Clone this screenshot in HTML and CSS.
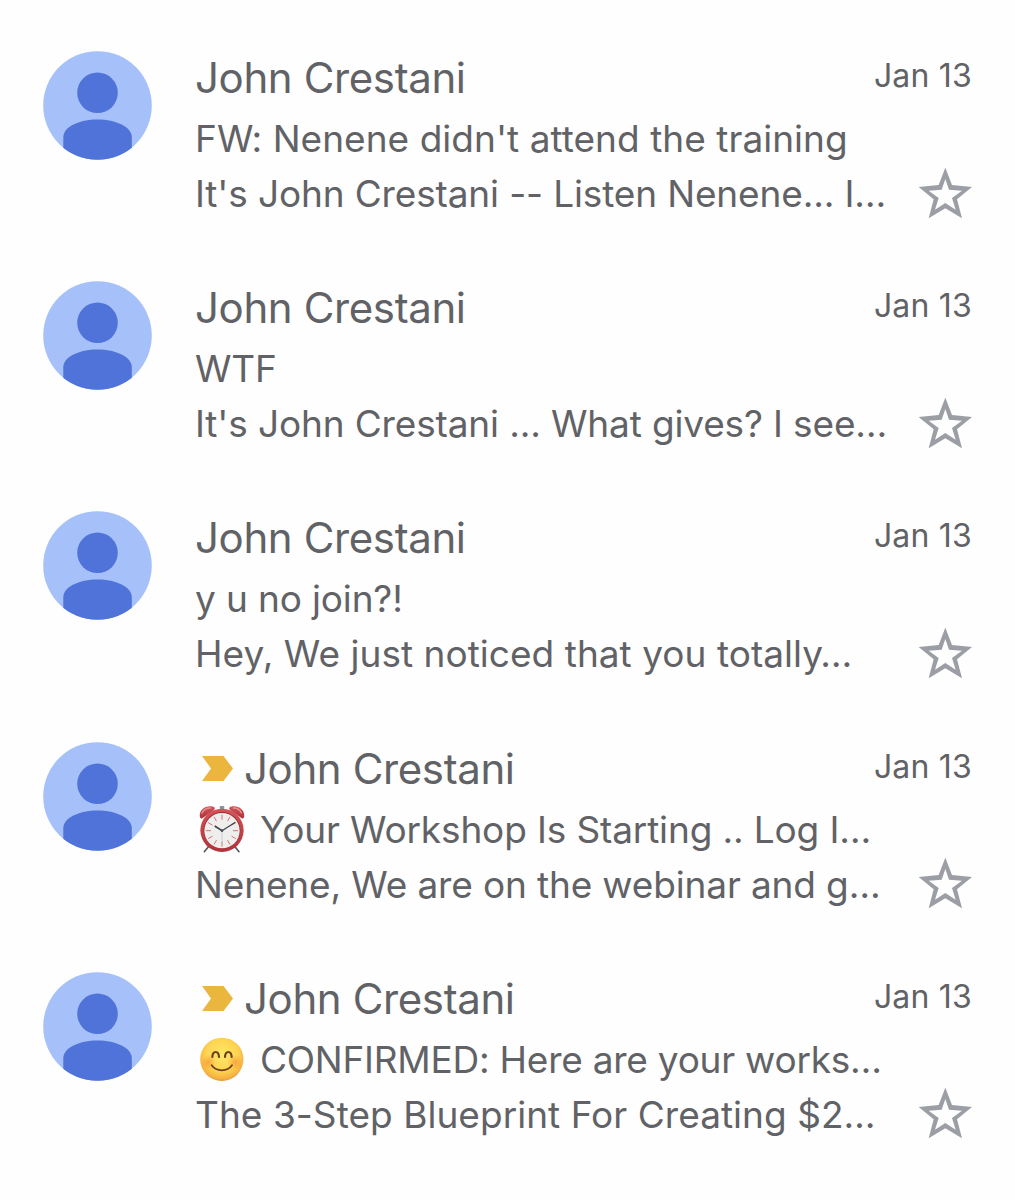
FILE: index.html
```html
<!DOCTYPE html>
<html lang="en">
<head>
<meta charset="UTF-8">
<meta name="viewport" content="width=device-width, initial-scale=1.0">
<title>Inbox</title>
<link rel="stylesheet" href="styles.css">
</head>
<body>

<!-- shared icons -->
<svg class="sprite" aria-hidden="true">
    <symbol id="avatar" viewBox="0 0 109 109">
        <clipPath id="avatarClip"><circle cx="54.5" cy="54.5" r="54.3" /></clipPath>
        <circle cx="54.5" cy="54.5" r="54.3" fill="#a6c1fa" />
        <g clip-path="url(#avatarClip)" fill="#4f73d8">
            <circle cx="54.5" cy="41.8" r="20.3" />
            <path d="M20.3 109V86C20.3 76 36 68.5 54.5 68.5S88.8 76 88.8 86v23z" />
        </g>
    </symbol>
    <symbol id="star" viewBox="9 13 162 156">
        <path d="M91 12L111 64 171 70 126 107 141 164 91 134 41 164 56 107 11 70 71 64zM91 46L80 78 41 81 71 103 60 138 91 118 122 138 111 103 141 81 102 78z" fill="#9b9ea4" fill-rule="evenodd" />
    </symbol>
    <symbol id="important" viewBox="0 0 31 25">
        <path d="M0 0H21.5L31 12.5 21.5 25H0L9 12.5z" fill="#eab63e" />
    </symbol>
</svg>

<main class="mail-list">
    <article class="mail">
        <svg class="avatar"><use href="#avatar" /></svg>
        <div class="content">
            <div class="top">
                <h2 class="sender">John Crestani</h2>
                <time class="date">Jan 13</time>
            </div>
            <p class="subject loose">FW: Nenene didn't attend the training</p>
            <div class="bottom">
                <p class="snippet">It's John Crestani -- Listen Nenene... I…</p>
                <svg class="star"><use href="#star" /></svg>
            </div>
        </div>
    </article>

    <article class="mail">
        <svg class="avatar"><use href="#avatar" /></svg>
        <div class="content">
            <div class="top">
                <h2 class="sender">John Crestani</h2>
                <time class="date">Jan 13</time>
            </div>
            <p class="subject">WTF</p>
            <div class="bottom">
                <p class="snippet">It's John Crestani ... What gives? I see…</p>
                <svg class="star"><use href="#star" /></svg>
            </div>
        </div>
    </article>

    <article class="mail">
        <svg class="avatar"><use href="#avatar" /></svg>
        <div class="content">
            <div class="top">
                <h2 class="sender">John Crestani</h2>
                <time class="date">Jan 13</time>
            </div>
            <p class="subject">y u no join?!</p>
            <div class="bottom">
                <p class="snippet loose">Hey, We just noticed that you totally…</p>
                <svg class="star"><use href="#star" /></svg>
            </div>
        </div>
    </article>

    <article class="mail">
        <svg class="avatar"><use href="#avatar" /></svg>
        <div class="content">
            <div class="top">
                <svg class="important"><use href="#important" /></svg>
                <h2 class="sender">John Crestani</h2>
                <time class="date">Jan 13</time>
            </div>
            <div class="subject">
                <!-- alarm clock -->
                <svg class="emoji" viewBox="0 0 150 150">
                    <defs>
                        <linearGradient id="clockRed" x1="0" y1="0" x2="0" y2="1">
                            <stop offset="0" stop-color="#d25559" />
                            <stop offset="1" stop-color="#b0323a" />
                        </linearGradient>
                    </defs>
                    <path d="M36 123L22 140M112 123L126 140" stroke="#555a60" stroke-width="5" stroke-linecap="round" />
                    <rect x="68" y="3" width="14" height="10" rx="4" fill="#8c9197" />
                    <path d="M9 37C4 17 24-1 49 5c7 2 5 9-1 12L18 38c-5 4-8 3-9-1z" fill="url(#clockRed)" />
                    <path d="M141 37c5-20-15-38-40-32-7 2-5 9 1 12l30 21c5 4 8 3 9-1z" fill="url(#clockRed)" />
                    <path d="M15 25C19 14 29 9 41 9M109 9c11 0 20 5 24 15" fill="none" stroke="#e59090" stroke-width="4" stroke-linecap="round" />
                    <circle cx="75" cy="76" r="65" fill="url(#clockRed)" />
                    <circle cx="75" cy="76" r="55" fill="#9f2b33" />
                    <circle cx="75" cy="77" r="53" fill="#eeeeed" />
                    <g stroke="#db7177" stroke-width="3">
                        <path d="M75 29v15M75 110v15M27 77h15M108 77h15" />
                        <path d="M51 35.5l7.5 13M91.5 105.5l7.5 13M33.5 101l13-7.5M103.5 60.5l13-7.5M99 35.5l-7.5 13M58.5 105.5l-7.5 13M33.5 53l13 7.5M103.5 93.5l13 7.5" />
                    </g>
                    <path d="M75 77v42" stroke="#b9bbbe" stroke-width="2" />
                    <path d="M75 77L53 63" stroke="#3b4247" stroke-width="5" />
                    <path d="M75 77l40-25" stroke="#3b4247" stroke-width="3.5" />
                    <circle cx="75" cy="77" r="4" fill="#4a5056" />
                </svg>
                <span class="subject-text">Your Workshop Is Starting .. Log I…</span>
            </div>
            <div class="bottom">
                <p class="snippet">Nenene, We are on the webinar and g…</p>
                <svg class="star"><use href="#star" /></svg>
            </div>
        </div>
    </article>

    <article class="mail">
        <svg class="avatar"><use href="#avatar" /></svg>
        <div class="content">
            <div class="top">
                <svg class="important"><use href="#important" /></svg>
                <h2 class="sender">John Crestani</h2>
                <time class="date">Jan 13</time>
            </div>
            <div class="subject">
                <!-- smiling face -->
                <svg class="emoji" viewBox="0 0 150 150">
                    <defs>
                        <radialGradient id="faceYellow" cx=".5" cy=".4" r=".62">
                            <stop offset="0" stop-color="#ffe768" />
                            <stop offset=".6" stop-color="#fdd451" />
                            <stop offset=".88" stop-color="#f5b142" />
                            <stop offset="1" stop-color="#e08a30" />
                        </radialGradient>
                        <radialGradient id="blush">
                            <stop offset="0" stop-color="#f4772e" stop-opacity=".5" />
                            <stop offset="1" stop-color="#f4772e" stop-opacity="0" />
                        </radialGradient>
                    </defs>
                    <circle cx="74.5" cy="73" r="65" fill="url(#faceYellow)" />
                    <circle cx="34" cy="82" r="23" fill="url(#blush)" />
                    <circle cx="115" cy="82" r="23" fill="url(#blush)" />
                    <path d="M46 66c1-20 19-20 20 0M84 66c1-20 19-20 20 0" fill="none" stroke="#6d421b" stroke-width="6.5" stroke-linecap="round" />
                    <path d="M44 91c14 20 47 20 61 0" fill="none" stroke="#6d421b" stroke-width="5.5" stroke-linecap="round" />
                </svg>
                <span class="subject-text tight">CONFIRMED: Here are your works…</span>
            </div>
            <div class="bottom">
                <p class="snippet loose">The 3-Step Blueprint For Creating $2…</p>
                <svg class="star"><use href="#star" /></svg>
            </div>
        </div>
    </article>
</main>

</body>
</html>
```
FILE: styles.css
```css
* {
    box-sizing: border-box;
}
body {
    margin: 0;
    font-family: Inter, sans-serif;
    background: #fefefe;
    color: #616266;
}
h2, p {
    margin: 0;
    font-weight: 400;
}
svg {
    display: block;
    flex-shrink: 0;
}
.sprite {
    position: absolute;
    width: 0;
    height: 0;
}

.mail-list {
    padding: 51px 43px 0;
}
.mail {
    display: flex;
    gap: 43px;
    height: 230.2px;
}
.mail:last-child {
    height: 200px;
}
.avatar {
    width: 109px;
    height: 109px;
}
.content {
    flex: 1;
    min-width: 0;
    white-space: nowrap;
}

.top {
    display: flex;
    align-items: center;
    height: 54px;
    margin-bottom: 6px;
}
.important {
    width: 31px;
    height: 25px;
    margin: 0 11px 0 7px;
}
.sender {
    font-size: 42px;
    line-height: 54px;
    letter-spacing: -0.38px;
}
.date {
    margin-left: auto;
    padding-bottom: 4px;
    font-size: 32px;
    line-height: 48px;
    letter-spacing: 0.2px;
}

.subject,
.snippet {
    font-size: 37px;
    line-height: 55px;
    letter-spacing: -0.14px;
}
.subject {
    display: flex;
    align-items: center;
    height: 55px;
}
.loose {
    letter-spacing: 0.04px;
}
.tight {
    letter-spacing: -0.24px;
}
.emoji {
    width: 50px;
    height: 50px;
    margin: 2px 13px 0 2px;
}
.bottom {
    display: flex;
    justify-content: space-between;
    align-items: center;
    height: 55px;
}
.star {
    width: 54px;
    height: 52px;
}
```
